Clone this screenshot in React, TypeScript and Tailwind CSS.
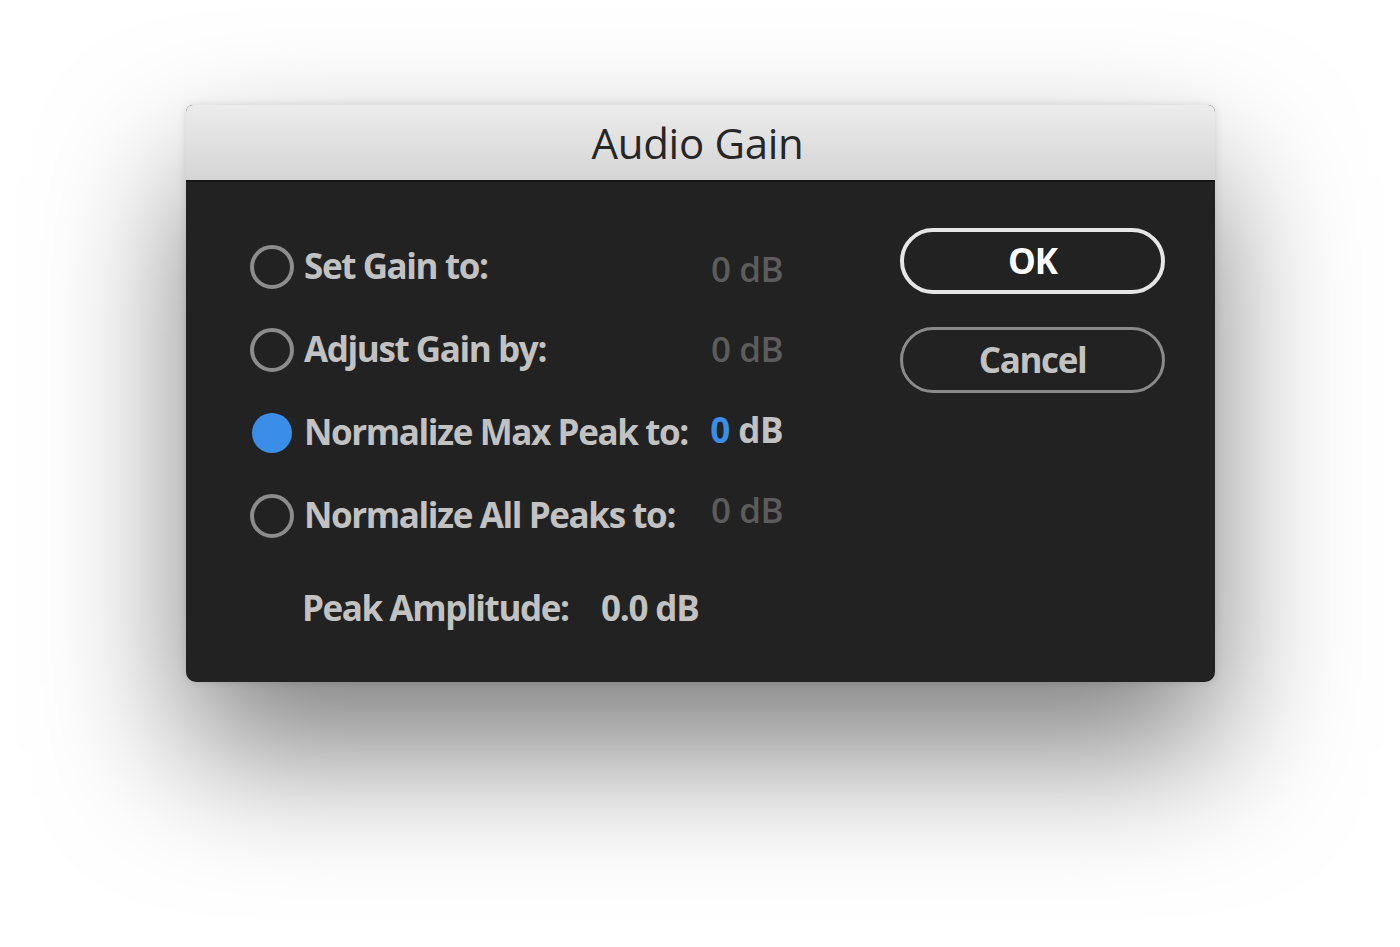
import React from "react";

const font = { fontFamily: '"Open Sans", "Liberation Sans", sans-serif' };

function Radio({ checked }: { checked?: boolean }) {
  if (checked) {
    return <div className="w-[44px] h-[44px] flex items-center justify-center shrink-0"><div className="w-[40px] h-[40px] rounded-full bg-[#3a8ee8]" /></div>;
  }
  return <div className="w-[44px] h-[44px] rounded-full border-[4px] border-[#8c8c8c] shrink-0" />;
}

function Row({ label, checked, dy = 0 }: { label: string; checked?: boolean; dy?: number }) {
  return (
    <div className="h-[83px] flex items-center w-[533px]">
      <Radio checked={checked} />
      <span className="ml-[10px] text-[35px] font-bold tracking-[-1.4px] text-[#c2c2c2] whitespace-nowrap">{label}</span>
      <span className="ml-auto text-[35px] tracking-[-0.5px] whitespace-nowrap" style={{ transform: `translateY(${dy}px)` }}>
        {checked ? (
          <>
            <span className="text-[#3a8ee8] font-bold">0</span>
            <span className="text-[#c2c2c2] font-bold"> dB</span>
          </>
        ) : (
          <span className="text-[#5c5c5c] font-semibold">0 dB</span>
        )}
      </span>
    </div>
  );
}

export default function App() {
  return (
    <div className="w-[1400px] h-[947px] bg-white overflow-hidden pt-[105px] pl-[186px]" style={font}>
      <div className="w-[1029px] h-[577px] rounded-t-[7px] rounded-b-[10px] overflow-hidden bg-[#222222] flex flex-col shadow-[0_70px_140px_rgba(0,0,0,0.5),0_0_8px_rgba(0,0,0,0.12)]">
        <div className="h-[77px] shrink-0 bg-gradient-to-b from-[#ececec] to-[#d5d5d5] border-b-[2px] border-[#151515] flex items-center justify-center">
          <span className="text-[42px] text-[#262626] tracking-[-0.3px] ml-[-6px]">Audio Gain</span>
        </div>
        <div className="flex flex-1">
          <div className="pl-[64px] pt-[43px] flex flex-col">
            <Row label="Set Gain to:" dy={3} />
            <Row label="Adjust Gain by:" />
            <Row label="Normalize Max Peak to:" checked dy={-2} />
            <Row label="Normalize All Peaks to:" dy={-5} />
            <div className="h-[83px] mt-[10px] flex items-center pl-[52px]">
              <span className="w-[299px] text-[35px] font-bold tracking-[-1.4px] text-[#c2c2c2] whitespace-nowrap">Peak Amplitude:</span>
              <span className="text-[35px] font-bold tracking-[-1.2px] text-[#c2c2c2] whitespace-nowrap">0.0 dB</span>
            </div>
          </div>
          <div className="ml-[117px] pt-[46px] flex flex-col gap-[33px]">
            <button className="w-[265px] h-[66px] rounded-full border-[4px] border-[#e6e6e6] text-[#ffffff] text-[35px] font-bold tracking-[-1px] flex items-center justify-center">OK</button>
            <button className="w-[265px] h-[66px] rounded-full border-[3px] border-[#8a8a8a] text-[#c2c2c2] text-[35px] font-bold tracking-[-1.4px] flex items-center justify-center">Cancel</button>
          </div>
        </div>
      </div>
    </div>
  );
}
